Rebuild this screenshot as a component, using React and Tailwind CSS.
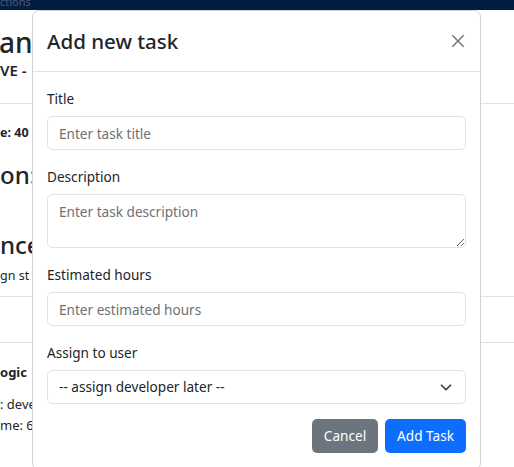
import React from "react";

const font = { fontFamily: '"Noto Sans", "Segoe UI", Roboto, sans-serif' };

const Field = ({ label, children }) => (
  <div className="mb-[16px]">
    <label className="block text-[13.6px] leading-[22px] mb-[6px] text-[#212529]">{label}</label>
    {children}
  </div>
);

const inputCls =
  "block w-full h-[34px] px-[11px] text-[13.6px] text-[#212529] bg-white border border-[#dee2e6] rounded-[5px] outline-none placeholder:text-[#6e7073]";

const App = () => {
  return (
    <div className="relative w-[514px] h-[467px] overflow-hidden bg-white text-[#212529]" style={font}>
      {/* page behind the modal */}
      <div className="h-[10px] bg-[#031c42] overflow-hidden">
        <div className="-mt-[5px] text-[11px] leading-[14px] text-[#4a5a78]">ctions</div>
      </div>
      <div className="h-[94px] border-b border-[#dee2e6] pt-[15px]">
        <div className="text-[28px] leading-[34px] font-medium -ml-[1px]">an</div>
        <div className="text-[15px] leading-[20px] font-semibold mt-[1px]">VE - </div>
      </div>
      <div className="h-[193px] border-b border-[#dee2e6] pt-[20px]">
        <div className="text-[12.5px] font-bold leading-[18px]">e: 40</div>
        <div className="text-[24px] leading-[32px] font-medium mt-[17px]">on:</div>
        <div className="text-[24px] leading-[32px] font-medium mt-[38px]">nce T</div>
        <div className="text-[12.5px] leading-[18px] mt-[6px]">gn st</div>
      </div>
      <div className="h-[46px] border-b border-[#dee2e6]" />
      <div className="pt-[20px]">
        <div className="text-[13px] font-bold leading-[18px]">ogic</div>
        <div className="text-[13px] leading-[18px] mt-[14px]">: deve</div>
        <div className="text-[13px] leading-[18px] mt-[3px]">me: 6</div>
      </div>

      {/* modal */}
      <div className="absolute left-[32px] top-[10px] w-[449px] h-[460px] bg-white border border-[#cfd1d4] rounded-[7px]">
        <div className="flex items-center justify-between h-[61px] pl-[14px] pr-[15px] border-b border-[#dee2e6]">
          <h4 className="text-[20.5px] leading-[30px] font-medium text-[#212529]">Add new task</h4>
          <button className="w-[14px] h-[14px] flex items-center justify-center">
            <svg width="14" height="14" viewBox="0 0 16 16">
              <path d="M1.5 1.5l13 13M14.5 1.5l-13 13" stroke="#6f6f6f" strokeWidth="1.6" />
            </svg>
          </button>
        </div>
        <div className="px-[14px] pt-[16px]">
          <Field label="Title">
            <input className={inputCls} placeholder="Enter task title" />
          </Field>
          <Field label="Description">
            <textarea
              className="block w-full h-[54px] px-[11px] py-[6px] text-[13.6px] leading-[21px] text-[#212529] bg-white border border-[#dee2e6] rounded-[5px] outline-none placeholder:text-[#6e7073]"
              placeholder="Enter task description"
            />
          </Field>
          <Field label="Estimated hours">
            <input className={inputCls} placeholder="Enter estimated hours" />
          </Field>
          <div>
            <label className="block text-[13.6px] leading-[22px] mb-[6px]">Assign to user</label>
            <div className="relative h-[34px] flex items-center px-[11px] text-[13.6px] border border-[#dee2e6] rounded-[5px]">
              <span>-- assign developer later --</span>
              <svg className="absolute right-[13px] top-[12px]" width="12" height="9" viewBox="0 0 16 12">
                <path d="M2 3l6 6 6-6" fill="none" stroke="#343a40" strokeWidth="2.2" strokeLinecap="round" strokeLinejoin="round" />
              </svg>
            </div>
          </div>
          <div className="flex justify-end gap-[7px] mt-[15px]">
            <button className="h-[34px] w-[66px] rounded-[5px] bg-[#6c757d] text-white text-[13.6px]">Cancel</button>
            <button className="h-[34px] w-[81px] rounded-[5px] bg-[#0d6efd] text-white text-[13.6px]">Add Task</button>
          </div>
        </div>
      </div>
    </div>
  );
};

export default App;
